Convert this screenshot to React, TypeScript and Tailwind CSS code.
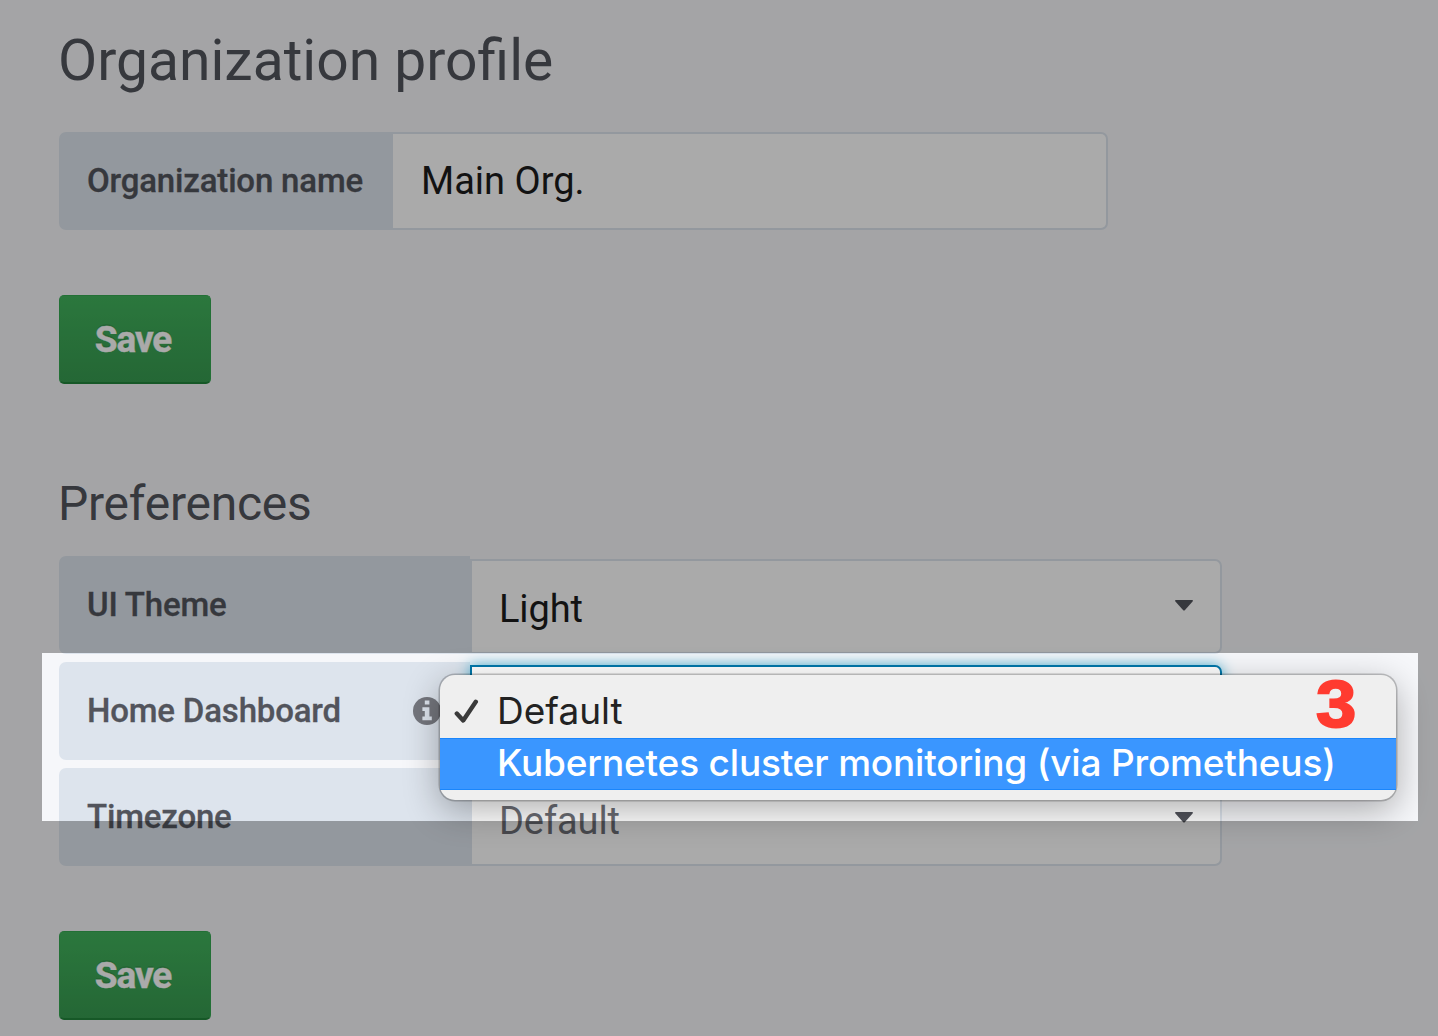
import type { ReactNode } from 'react';

function Label({ children, className = '' }: { children: ReactNode; className?: string }) {
  return (
    <div
      className={`flex h-[98px] shrink-0 items-center rounded-l-[7px] bg-[#dde4ed] pb-px pl-[28px] text-[33px] font-medium tracking-[-0.18px] text-[#52545c] [-webkit-text-stroke:0.3px_#52545c] ${className}`}
    >
      {children}
    </div>
  );
}

function Caret() {
  return (
    <svg className="mt-[-2px] h-[11px] w-[18px] fill-[#52545c]" viewBox="0 0 18 11">
      <path d="M0.8 0H17.2Q18.4 0.4 17.6 1.6L10 10Q9 11 8 10L0.4 1.6Q-0.4 0.4 0.8 0Z" />
    </svg>
  );
}

function Select({ children, className = '' }: { children?: ReactNode; className?: string }) {
  return (
    <div
      className={`mt-[3px] flex h-[95px] w-[752px] items-center justify-between rounded-r-[7px] border-2 bg-white pr-[27px] pl-[27px] text-[38px] ${className}`}
    >
      <span className="pt-[5px] tracking-[-0.1px]">{children}</span>
      <Caret />
    </div>
  );
}

function SaveButton() {
  return (
    <button className="flex h-[89px] w-[152px] items-center justify-center rounded-[5px] border border-b-2 border-[#35a852] border-b-[#21843b] bg-linear-to-b from-[#41b35c] to-[#379b50] pt-[2px] pr-[4px] text-[37px] font-bold tracking-[-1.1px] text-white [text-shadow:0_-2px_0_rgba(0,0,0,0.1)] [-webkit-text-stroke:0.4px_white]">
      <span>Save</span>
    </button>
  );
}

function InfoIcon() {
  return (
    <svg className="h-[28px] w-[28px]" viewBox="0 0 28 28">
      <circle cx="14" cy="14" r="14" fill="#74767d" />
      <path d="M11.8 3.4h4.6v4.2h-4.6zM9.4 10.2h7v9.2h2.4v3.8H9.4v-3.8h2.4v-5.4H9.4z" fill="#dde4ed" />
    </svg>
  );
}

function DropdownMenu() {
  return (
    <div className="absolute top-[675px] left-[440px] h-[125px] w-[956px] rounded-[15px] bg-[#efefef] pt-[11px] font-['Inter'] text-[37px] text-[#222] shadow-[0_0_0_1.5px_rgba(0,0,0,0.22),0_10px_36px_rgba(0,0,0,0.32)]">
      <div className="flex h-[52px] items-center pb-[2px]">
        <svg className="ml-[14px] h-[25px] w-[25px]" viewBox="0 0 25 25" fill="none" stroke="#3a3a3a" strokeWidth="4.4" strokeLinecap="round" strokeLinejoin="round">
          <path d="M2.8 14.5L9.2 21.5L21.8 2.8" />
        </svg>
        <span className="ml-[18px]">Default</span>
      </div>
      <div className="flex h-[52px] items-center border-y border-[#1a86fc] bg-[#3a96ff] pb-[3px] pl-[57px] font-medium tracking-[-0.18px] whitespace-nowrap text-white">
        <span>Kubernetes cluster monitoring (via Prometheus)</span>
      </div>
    </div>
  );
}

export default function App() {
  return (
    <main className="relative h-[1036px] w-[1438px] overflow-hidden bg-[#f6f7fa] pl-[59px] font-['Roboto',sans-serif]">
      <h1 className="ml-[-1px] h-[132px] pt-[28px] text-[57px] leading-[66px] text-[#52545c]">Organization profile</h1>
      <div className="flex">
        <Label className="w-[334px]">Organization name</Label>
        <div className="flex h-[98px] w-[715px] items-center rounded-r-[7px] border-2 border-l-0 border-[#dde4ed] bg-white pt-px pl-[28px] text-[38px] text-[#1c1c1c]">
          <span>Main Org.</span>
        </div>
      </div>
      <div className="mt-[65px]">
        <SaveButton />
      </div>

      <h2 className="mt-[84px] ml-[-1px] h-[88px] pt-[7px] text-[48px] leading-[58px] tracking-[-0.25px] text-[#52545c]">Preferences</h2>
      <div className="flex flex-col gap-[8px]">
        <div className="flex">
          <Label className="w-[411px]">UI Theme</Label>
          <Select className="border-[#dde4ed] text-[#1c1c1c]">Light</Select>
        </div>
        <div className="flex">
          <Label className="w-[411px] justify-between pr-[29px]">
            <span>Home Dashboard</span>
            <InfoIcon />
          </Label>
          <Select className="border-[#0077aa] text-[#1c1c1c] shadow-[0_0_14px_#4fb5d8]" />
        </div>
        <div className="flex">
          <Label className="w-[411px]">Timezone</Label>
          <Select className="border-[#dde4ed] text-[#6c6e75]">Default</Select>
        </div>
      </div>
      <div className="mt-[65px]">
        <SaveButton />
      </div>

      <DropdownMenu />
      <div className="pointer-events-none absolute top-[653px] left-[42px] h-[168px] w-[1376px] shadow-[0_0_0_1500px_rgba(0,0,0,0.333)]" />
      <div className="absolute top-[664px] left-[1316px] origin-left scale-x-[1.08] font-['Liberation_Sans'] text-[67px] leading-[80px] font-bold text-[#ff3b30] [-webkit-text-stroke:2px_#ff3b30]">
        3
      </div>
    </main>
  );
}
